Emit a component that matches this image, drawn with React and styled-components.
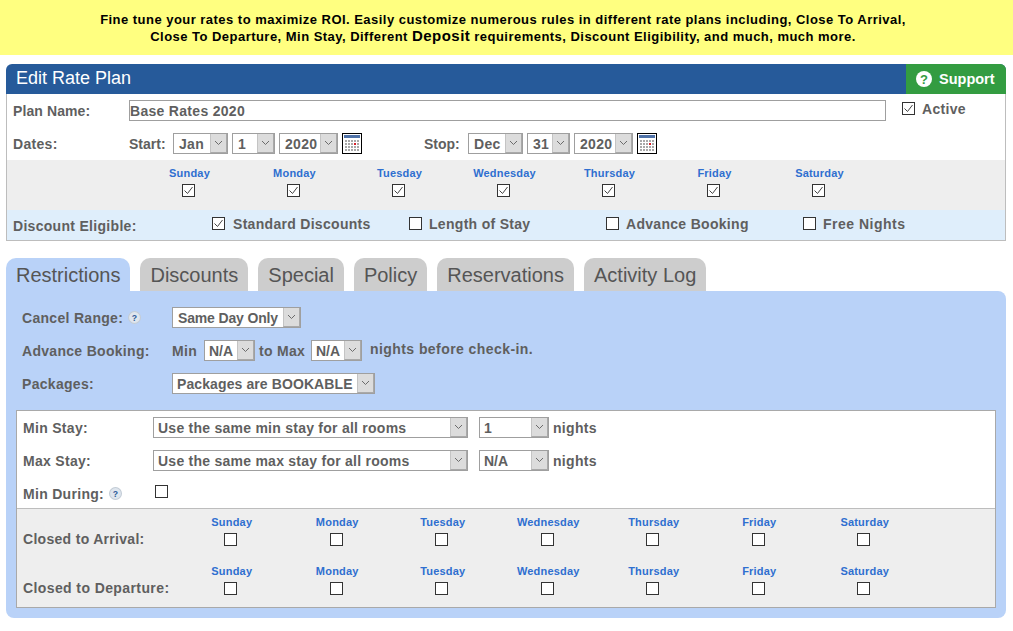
import React from 'react';
import styled, { createGlobalStyle } from 'styled-components';

const GlobalStyle = createGlobalStyle`
  html, body {
    margin: 0;
    padding: 0;
    background: #fff;
    font-family: "Liberation Sans", Arial, sans-serif;
  }
`;

const Banner = styled.div`
  height: 55px;
  box-sizing: border-box;
  padding: 11px 7px 0 0;
  background: #ffff80;
  color: #000;
  text-align: center;
  font-size: 13px;
  font-weight: bold;
  line-height: 17px;
  letter-spacing: 0.47px;
  span {
    font-size: 15px;
    line-height: 0;
  }
`;

const Page = styled.div`
  padding: 9px 7px 12px 6px;
`;

const Header = styled.div`
  display: flex;
  justify-content: space-between;
  height: 30px;
  background: #265a9a;
  border-radius: 6px 6px 0 0;
  overflow: hidden;
`;

const Title = styled.div`
  padding-left: 10px;
  color: #fff;
  font-size: 18px;
  line-height: 29px;
`;

const Support = styled.div`
  display: flex;
  align-items: center;
  gap: 7px;
  width: 100px;
  box-sizing: border-box;
  padding-left: 10px;
  background: #339c41;
  color: #fff;
  font-size: 14.5px;
  font-weight: bold;
`;

const TopBox = styled.div`
  border: 1px solid #bdbdbd;
  border-top: 0;
`;

const Row = styled.div`
  display: flex;
  align-items: flex-start;
  height: ${(p) => p.$h}px;
  box-sizing: border-box;
  padding: ${(p) => p.$top || 6}px 0 0 ${(p) => p.$left || 6}px;
  background: ${(p) => p.$bg || 'transparent'};
`;

const Label = styled.div`
  flex: none;
  width: ${(p) => p.$w}px;
  color: #5f5f5f;
  font-size: 14px;
  font-weight: bold;
  letter-spacing: ${(p) => p.$ls ?? 0.3}px;
  line-height: ${(p) => p.$lh || 22}px;
  white-space: nowrap;
`;

const Text = styled.div`
  flex: none;
  width: ${(p) => (p.$w ? `${p.$w}px` : 'auto')};
  margin-left: ${(p) => p.$ml || 0}px;
  color: #5f5f5f;
  font-size: 14px;
  font-weight: bold;
  letter-spacing: ${(p) => p.$ls ?? 0.3}px;
  line-height: ${(p) => p.$lh || 22}px;
  white-space: nowrap;
`;

const NameInput = styled.input`
  flex: none;
  width: 757px;
  height: 21px;
  box-sizing: border-box;
  padding: 1px 0 0 0;
  border: 1px solid #9f9f9f;
  outline: 0;
  color: #5f5f5f;
  font-family: inherit;
  font-size: 14px;
  font-weight: bold;
  letter-spacing: 0.3px;
`;

const SelectBox = styled.div`
  flex: none;
  display: flex;
  width: ${(p) => p.$w}px;
  height: 21px;
  box-sizing: border-box;
  margin-left: ${(p) => p.$ml || 0}px;
  border: 1px solid #9f9f9f;
  background: #fff;
  color: #5f5f5f;
  font-size: 14px;
  font-weight: bold;
  letter-spacing: ${(p) => p.$ls ?? 0.3}px;
  line-height: 20px;
`;

const SelectValue = styled.div`
  flex: 1;
  min-width: 0;
  padding-left: ${(p) => p.$pad || 4}px;
  white-space: nowrap;
  overflow: hidden;
`;

const SelectArrow = styled.div`
  flex: none;
  display: flex;
  align-items: center;
  justify-content: center;
  width: 17px;
  box-sizing: border-box;
  border-left: 1px solid #c4c4c4;
  border-right: 1px solid #a9a9a9;
  border-bottom: 1px solid #a9a9a9;
  background: #dcdcdc;
  color: #6b6b6b;
`;

const Box = styled.span`
  flex: none;
  display: flex;
  align-items: center;
  justify-content: center;
  width: 13px;
  height: 13px;
  box-sizing: border-box;
  margin-left: ${(p) => p.$ml || 0}px;
  margin-right: ${(p) => p.$mr || 0}px;
  margin-top: ${(p) => p.$mt || 0}px;
  border: 1px solid #333;
  background: #fff;
`;

const DayGrid = styled.div`
  display: grid;
  grid-template-columns: repeat(7, ${(p) => p.$col}px);
  margin-left: ${(p) => p.$ml || 0}px;
`;

const DayCell = styled.div`
  display: flex;
  flex-direction: column;
  align-items: center;
`;

const DayName = styled.div`
  height: 15px;
  margin-bottom: 3px;
  color: #2f6fd0;
  font-size: 11px;
  font-weight: bold;
  letter-spacing: 0.2px;
  line-height: 15px;
`;

const TabBar = styled.div`
  display: flex;
  gap: 10px;
  height: 33px;
  margin-top: 17px;
`;

const Tab = styled.div`
  padding: 0 10px;
  border-radius: 10px 10px 0 0;
  background: ${(p) => (p.$active ? '#b9d2f8' : '#cdcdcd')};
  color: #555;
  font-size: 20px;
  line-height: 34px;
`;

const TabPanel = styled.div`
  height: 327px;
  box-sizing: border-box;
  padding: 16px 10px 0;
  border-radius: 0 8px 8px 8px;
  background: #b9d2f8;
`;

const PanelRow = styled.div`
  display: flex;
  align-items: flex-start;
  height: 33px;
  padding-left: 6px;
`;

const InnerBox = styled.div`
  margin-top: 4px;
  border: 1px solid #a9a9a9;
  background: #fff;
`;

const ClosedBox = styled.div`
  height: 99px;
  box-sizing: border-box;
  border-top: 1px solid #bdbdbd;
  background: #eee;
`;

const ClosedRow = styled.div`
  display: flex;
  height: 49px;
  box-sizing: border-box;
  padding: 6px 0 0 6px;
`;

const Help = styled.span`
  display: inline-flex;
  margin-left: ${(p) => p.$ml}px;
  vertical-align: -1px;
`;

const days = ['Sunday', 'Monday', 'Tuesday', 'Wednesday', 'Thursday', 'Friday', 'Saturday'];

function Chevron() {
  return (
    <svg width="9" height="6" viewBox="0 0 9 6" fill="none" stroke="currentColor" strokeWidth="1">
      <path d="M1 1l3.5 3.5L8 1" />
    </svg>
  );
}

function Select({ w, ml, pad, ls, children }) {
  return (
    <SelectBox $w={w} $ml={ml} $ls={ls}>
      <SelectValue $pad={pad}>{children}</SelectValue>
      <SelectArrow>
        <Chevron />
      </SelectArrow>
    </SelectBox>
  );
}

function Check({ on, ml, mr, mt }) {
  return (
    <Box $ml={ml} $mr={mr} $mt={mt}>
      {on && (
        <svg width="11" height="11" viewBox="0 0 11 11" fill="none" stroke="#444" strokeWidth="1">
          <path d="M1.5 5.5l3 3L9.5 2" />
        </svg>
      )}
    </Box>
  );
}

function Calendar({ ml }) {
  const dots = [];
  for (let y = 0; y < 4; y++) {
    for (let x = 0; x < 5; x++) {
      dots.push(
        <rect
          key={`${x}-${y}`}
          x={3 + x * 3}
          y={7 + y * 3}
          width="2"
          height="2"
          fill={x === 3 && y === 1 ? '#d8202a' : '#a8a8a8'}
        />
      );
    }
  }
  return (
    <svg width="20" height="21" viewBox="0 0 20 21" style={{ flex: 'none', marginLeft: ml }}>
      <rect x="0.5" y="0.5" width="19" height="20" fill="#fff" stroke="#000" />
      <rect x="2" y="2" width="16" height="3" fill="#4f72a8" />
      {dots}
    </svg>
  );
}

function HelpIcon({ size, ml }) {
  return (
    <Help $ml={ml}>
      <svg width={size} height={size} viewBox="0 0 12 12">
        <circle cx="6" cy="6" r="5.5" fill="#dfe6ee" stroke="#c3ccd6" />
        <text x="6" y="9" textAnchor="middle" fontSize="8" fontWeight="bold" fontFamily="Liberation Sans" fill="#2c5a98">?</text>
      </svg>
    </Help>
  );
}

function Days({ col, ml, checked }) {
  return (
    <DayGrid $col={col} $ml={ml}>
      {days.map((d) => (
        <DayCell key={d}>
          <DayName>{d}</DayName>
          <Check on={checked} mr={2} />
        </DayCell>
      ))}
    </DayGrid>
  );
}

function DateGroup({ month, day }) {
  return (
    <>
      <Select w={55} pad={5}>{month}</Select>
      <Select w={43} ml={4} pad={5}>{day}</Select>
      <Select w={59} ml={4} pad={5}>2020</Select>
      <Calendar ml={4} />
    </>
  );
}

export default function App() {
  return (
    <>
      <GlobalStyle />
      <Banner>
        Fine tune your rates to maximize ROI. Easily customize numerous rules in different rate plans including, Close To Arrival,
        <br />
        Close To Departure, Min Stay, Different <span>Deposit</span> requirements, Discount Eligibility, and much, much more.
      </Banner>
      <Page>
        <Header>
          <Title>Edit Rate Plan</Title>
          <Support>
            <svg width="16" height="16" viewBox="0 0 16 16">
              <circle cx="8" cy="8" r="8" fill="#fff" />
              <text x="8" y="12.5" textAnchor="middle" fontSize="13" fontWeight="bold" fontFamily="Liberation Sans" fill="#339c41">?</text>
            </svg>
            Support
          </Support>
        </Header>
        <TopBox>
          <Row $h={33}>
            <Label $w={116} $ls={0.1}>Plan Name:</Label>
            <NameInput defaultValue="Base Rates 2020" readOnly />
            <Check on ml={16} mt={2} mr={7} />
            <Text $lh={18}>Active</Text>
          </Row>
          <Row $h={33}>
            <Label $w={116}>Dates:</Label>
            <Text $w={44} $ls={0}>Start:</Text>
            <DateGroup month="Jan" day="1" />
            <Text $ml={62} $w={44} $ls={0}>Stop:</Text>
            <DateGroup month="Dec" day="31" />
          </Row>
          <Row $h={50} $bg="#eee" $top={6} $left={1}>
            <Days col={105} ml={129} checked />
          </Row>
          <Row $h={30} $bg="#dfeefb" $top={7}>
            <Label $w={199} $lh={19}>Discount Eligible:</Label>
            <Check on mr={8} />
            <Text $lh={14} $w={176}>Standard Discounts</Text>
            <Check mr={7} />
            <Text $lh={14} $w={177}>Length of Stay</Text>
            <Check mr={7} />
            <Text $lh={14} $w={177}>Advance Booking</Text>
            <Check mr={7} />
            <Text $lh={14} $ls={0.5}>Free Nights</Text>
          </Row>
        </TopBox>

        <TabBar>
          <Tab $active>Restrictions</Tab>
          <Tab>Discounts</Tab>
          <Tab>Special</Tab>
          <Tab>Policy</Tab>
          <Tab>Reservations</Tab>
          <Tab>Activity Log</Tab>
        </TabBar>
        <TabPanel>
          <PanelRow>
            <Label $w={150}>Cancel Range:<HelpIcon size={13} ml={5} /></Label>
            <Select w={129} pad={5} ls={-0.15}>Same Day Only</Select>
          </PanelRow>
          <PanelRow>
            <Label $w={150}>Advance Booking:</Label>
            <Text $w={32}>Min</Text>
            <Select w={51} pad={4} ls={0}>N/A</Select>
            <Text $ml={4} $w={52}>to Max</Text>
            <Select w={51} pad={4} ls={0}>N/A</Select>
            <Text $ml={8} $lh={18} $ls={0.43}>nights before check-in.</Text>
          </PanelRow>
          <PanelRow>
            <Label $w={150}>Packages:</Label>
            <Select w={203} pad={4} ls={0.1}>Packages are BOOKABLE</Select>
          </PanelRow>
          <InnerBox>
            <Row $h={33}>
              <Label $w={130}>Min Stay:</Label>
              <Select w={315} pad={4} ls={0.25}>Use the same min stay for all rooms</Select>
              <Select w={70} ml={11} pad={4}>1</Select>
              <Text $ml={4}>nights</Text>
            </Row>
            <Row $h={33}>
              <Label $w={130}>Max Stay:</Label>
              <Select w={315} pad={4} ls={0.25}>Use the same max stay for all rooms</Select>
              <Select w={70} ml={11} pad={4} ls={0}>N/A</Select>
              <Text $ml={4}>nights</Text>
            </Row>
            <Row $h={31} $top={6}>
              <Label $w={132}>Min During:<HelpIcon size={13} ml={5} /></Label>
              <Check mt={2} />
            </Row>
            <ClosedBox>
              <ClosedRow>
                <Label $w={156} $lh={48}>Closed to Arrival:</Label>
                <Days col={105.5} />
              </ClosedRow>
              <ClosedRow>
                <Label $w={156} $lh={48} $ls={0.4}>Closed to Departure:</Label>
                <Days col={105.5} />
              </ClosedRow>
            </ClosedBox>
          </InnerBox>
        </TabPanel>
      </Page>
    </>
  );
}
